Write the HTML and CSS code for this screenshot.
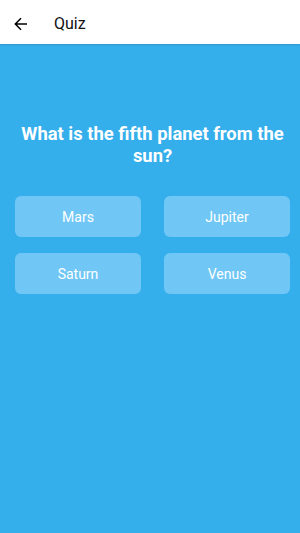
FILE: index.html
```html
<!DOCTYPE html>
<html>
<head>
<meta charset="utf-8">
<link rel="stylesheet" href="styles.css">
</head>
<body>
<div class="app">
  <header class="bar">
    <svg class="back" width="16" height="16" viewBox="0 0 16 16"><path d="M14 8H2.5M8 2.3L2.3 8L8 13.7" fill="none" stroke="#000" stroke-width="1.5"/></svg>
    <span class="title">Quiz</span>
  </header>
  <main class="body">
    <h1 class="question">What is the fifth planet from the sun?</h1>
    <div class="answers">
      <button class="answer">Mars</button>
      <button class="answer">Jupiter</button>
      <button class="answer">Saturn</button>
      <button class="answer">Venus</button>
    </div>
  </main>
</div>
</body>
</html>
```
FILE: styles.css
```css
html, body { margin: 0; padding: 0; }
body { font-family: Roboto, "Liberation Sans", sans-serif; }
.app { width: 300px; height: 533px; display: flex; flex-direction: column; background: #35aeec; }
.bar { height: 44px; box-sizing: border-box; padding-top: 3px; background: #fff; display: flex; align-items: center; padding-left: 13px; box-shadow: 0 1px 2px rgba(0,0,0,0.12); position: relative; z-index: 1; }
.back { display: block; }
.title { margin-left: 25px; font-size: 16px; font-weight: 400; color: #111; }
.body { flex: 1; padding: 79px 10px 0 15px; }
.question { margin: 0; text-align: center; color: #fff; font-size: 18.4px; font-weight: 700; line-height: 22px; }
.answers { margin-top: 29px; display: grid; grid-template-columns: 126px 126px; column-gap: 23px; row-gap: 16px; }
.answer { height: 41px; border: none; border-radius: 6px; background: #70c7f5; color: #fff; font-family: inherit; font-size: 14px; padding: 0; }
```
